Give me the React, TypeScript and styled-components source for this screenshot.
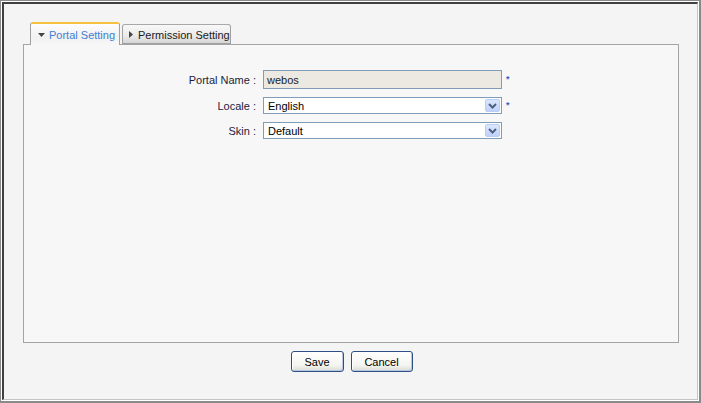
import React from "react";
import styled, { createGlobalStyle } from "styled-components";

const Global = createGlobalStyle`
  html, body { margin: 0; padding: 0; background: #f4f4f4; }
  body { font-family: "Liberation Sans", Arial, sans-serif; font-size: 11px; }
  * { box-sizing: border-box; }
`;

const FrameOuter = styled.div`
  width: 701px;
  height: 403px;
  border-style: solid;
  border-color: #8a8a8a;
  border-width: 1px 2px 2px 1px;
  display: flex;
`;

const FrameMid = styled.div`
  flex: 1;
  border: 1px solid #ffffff;
  display: flex;
`;

const FrameInner = styled.div`
  flex: 1;
  border-style: solid;
  border-width: 2px 1px 1px 2px;
  border-color: #404040 #c4c4c4 #c4c4c4 #404040;
  background: #f4f4f4;
  padding: 18px 18px 0 19px;
  display: flex;
  flex-direction: column;
`;

const TabStrip = styled.div`
  display: flex;
  align-items: flex-end;
  gap: 2px;
  margin-left: 7px;
  height: 22px;
  position: relative;
  z-index: 1;
`;

const Tab = styled.div<{ $active?: boolean }>`
  height: ${(p) => (p.$active ? "23px" : "20px")};
  margin-bottom: ${(p) => (p.$active ? "-1px" : "0")};
  width: ${(p) => (p.$active ? "90px" : "109px")};
  border: 1px solid #a0a0a0;
  border-top: ${(p) => (p.$active ? "2px solid #f5c13f" : "1px solid #a8a8a8")};
  border-bottom: ${(p) => (p.$active ? "none" : "1px solid #a0a0a0")};
  border-radius: 3px 3px 0 0;
  background: ${(p) =>
    p.$active
      ? "linear-gradient(#fdfdfd, #f1f1f1 60%, #f7f7f7)"
      : "linear-gradient(#f8f8f8, #ececec 55%, #d6d6d6)"};
  color: ${(p) => (p.$active ? "#3f7fd8" : "#1a1a1a")};
  display: flex;
  align-items: center;
  padding-left: ${(p) => (p.$active ? "7px" : "6px")};
  padding-top: ${(p) => (p.$active ? "0" : "1px")};
  gap: ${(p) => (p.$active ? "4px" : "5px")};
  font-size: 11px;
  white-space: nowrap;
  overflow: hidden;
  & > svg { flex-shrink: 0; }
`;

const Panel = styled.div`
  height: 299px;
  border: 1px solid #a4a4a4;
  background: #f7f7f7;
  padding-top: 25px;
`;

const Form = styled.div`
  display: grid;
  grid-template-columns: 232px 239px auto;
  column-gap: 7px;
  row-gap: 8px;
  align-items: center;
`;

const Label = styled.div`
  text-align: right;
  color: #1c1c3c;
  font-size: 11px;
`;

const TextField = styled.div`
  height: 19px;
  border: 1px solid #7f9db9;
  background: #ebe9e1;
  color: #222;
  display: flex;
  align-items: center;
  padding-left: 3px;
  font-size: 11px;
`;

const Select = styled.div`
  height: 17px;
  border: 1px solid #7f9db9;
  background: #ffffff;
  color: #000;
  display: flex;
  align-items: center;
  justify-content: space-between;
  padding: 1px 1px 1px 4px;
  font-size: 11px;
`;

const DropButton = styled.div`
  width: 15px;
  height: 13px;
  border-radius: 2px;
  border: 1px solid #b9cdf7;
  background: linear-gradient(#dce6fd, #c0d2fa);
  display: flex;
  align-items: center;
  justify-content: center;
`;

const Required = styled.span`
  color: #3a5fc8;
  font-size: 9px;
  font-weight: bold;
  margin-left: -3px;
  line-height: 1;
`;

const ButtonRow = styled.div`
  display: flex;
  justify-content: center;
  gap: 7px;
  margin-top: 8px;
  padding-left: 1px;
`;

const Button = styled.button<{ $w: number }>`
  width: ${(p) => p.$w}px;
  height: 21px;
  border: 1px solid #2d4f86;
  border-radius: 3px;
  background: linear-gradient(#ffffff, #f4f4f0 70%, #dcdcd6);
  box-shadow: inset -1px -1px 0 #b8c6e0, inset 1px 1px 0 #fff;
  font-family: "Liberation Sans", Arial, sans-serif;
  font-size: 11px;
  color: #000;
  padding: 0;
`;

const Chevron = () => (
  <svg width="9" height="6" viewBox="0 0 9 6">
    <path d="M1 1 L4.5 4.5 L8 1" fill="none" stroke="#4d6185" strokeWidth="2" />
  </svg>
);

const TriDown = () => (
  <svg width="7" height="4" viewBox="0 0 7 4">
    <path d="M0 0 H7 L3.5 4 Z" fill="#444" />
  </svg>
);

const TriRight = () => (
  <svg width="4" height="7" viewBox="0 0 4 7">
    <path d="M0 0 V7 L4 3.5 Z" fill="#444" />
  </svg>
);

export default function App() {
  return (
    <>
      <Global />
      <FrameOuter>
        <FrameMid>
          <FrameInner>
            <TabStrip>
              <Tab $active>
                <TriDown />
                <span>Portal Setting</span>
              </Tab>
              <Tab>
                <TriRight />
                <span>Permission Setting</span>
              </Tab>
            </TabStrip>
            <Panel>
              <Form>
                <Label>Portal Name :</Label>
                <TextField>webos</TextField>
                <Required>*</Required>
                <Label>Locale :</Label>
                <Select>
                  <span>English</span>
                  <DropButton>
                    <Chevron />
                  </DropButton>
                </Select>
                <Required>*</Required>
                <Label>Skin :</Label>
                <Select>
                  <span>Default</span>
                  <DropButton>
                    <Chevron />
                  </DropButton>
                </Select>
                <span />
              </Form>
            </Panel>
            <ButtonRow>
              <Button $w={53}>Save</Button>
              <Button $w={62}>Cancel</Button>
            </ButtonRow>
          </FrameInner>
        </FrameMid>
      </FrameOuter>
    </>
  );
}
